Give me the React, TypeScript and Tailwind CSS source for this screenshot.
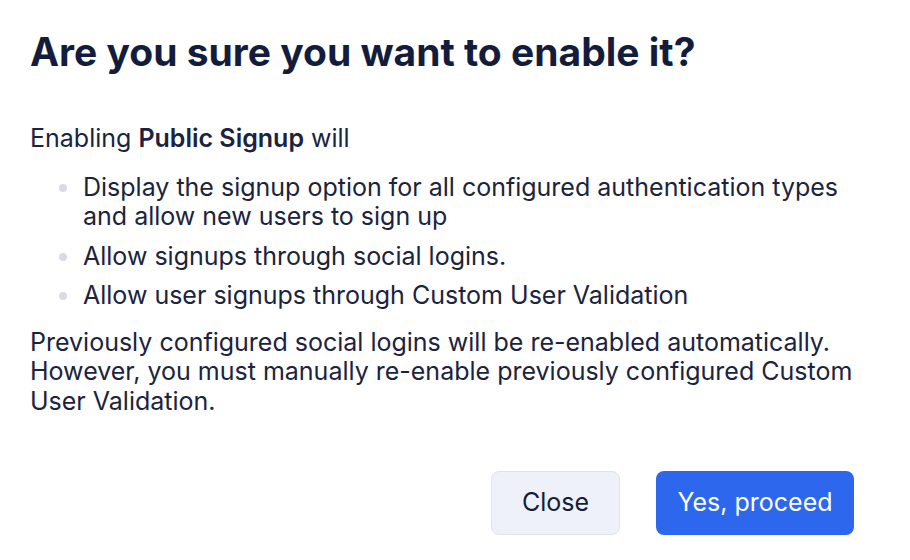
import React from "react";

export default function App() {
  const items = [
    "Display the signup option for all configured authentication types and allow new users to sign up",
    "Allow signups through social logins.",
    "Allow user signups through Custom User Validation",
  ];
  return (
    <div
      className="w-[910px] h-[560px] bg-white text-[#1b2340] overflow-hidden"
      style={{ fontFamily: "Inter, 'Noto Sans', sans-serif" }}
    >
      <div className="pl-[30px] pr-[40px] pt-[28px]">
        <h1 className="text-[39px] leading-[48px] font-bold text-[#131d3b]">
          Are you sure you want to enable it?
        </h1>
        <div className="mt-[48px] text-[25px] leading-[29.5px]">
          <p>
            Enabling <span className="font-semibold">Public Signup</span> will
          </p>
          <ul className="mt-[19px] flex flex-col gap-[10px] pl-[29px]">
            {items.map((t) => (
              <li key={t} className="flex items-start">
                <span className="mt-[11px] mr-[16px] w-[8px] h-[8px] rounded-full bg-[#d8dbe3] shrink-0" />
                <span className="max-w-[790px]">{t}</span>
              </li>
            ))}
          </ul>
          <p className="mt-[17px] max-w-[835px]">
            Previously configured social logins will be re-enabled automatically. However, you must manually re-enable
            previously configured Custom User Validation.
          </p>
        </div>
        <div className="mt-[55px] flex justify-end gap-[36px] pr-[16px]">
          <button className="w-[129px] h-[64px] rounded-[8px] bg-[#eef1f9] border border-[#dfe3ec] text-[25px] text-[#131d3b]">
            Close
          </button>
          <button className="w-[198px] h-[64px] rounded-[8px] bg-[#2d67ee] text-white text-[25px]">
            Yes, proceed
          </button>
        </div>
      </div>
    </div>
  );
}
